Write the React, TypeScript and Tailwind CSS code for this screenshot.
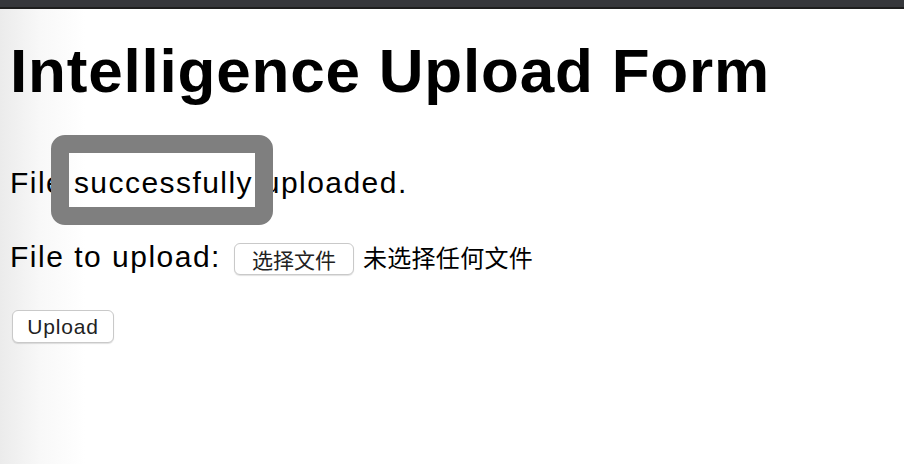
import React from 'react';

const sans = { fontFamily: '"Liberation Sans", Arial, "Noto Sans CJK SC", sans-serif' };
const cjk = { fontFamily: '"Noto Sans CJK SC", sans-serif' };

const App = () => {
    return (
        <div className="relative w-full h-[464px] overflow-hidden bg-white" style={sans}>
            {/* window chrome strip */}
            <div className="h-[7px] bg-[#36373b]" />
            <div className="h-[2px] bg-[#1e1e1e]" />

            <main className="h-[455px] pt-[31px] px-[10px] bg-[linear-gradient(to_right,#ebebeb,#f8f8f8_40px,#ffffff_85px)] text-black">
                <h1 className="text-[62px] leading-[62px] font-bold tracking-[0.8px]">
                    Intelligence Upload Form
                </h1>

                <p className="mt-[63px] text-[30px] leading-[36px] tracking-[1.45px]">
                    File successfully uploaded.
                </p>

                <div className="mt-[38px] flex items-start">
                    <label className="text-[30px] leading-[36px] tracking-[1.5px]">File to upload:</label>
                    <button className="ml-[13px] mt-[4px] w-[120px] h-[32px] rounded-[6px] border border-[#c9c9c9] bg-white shadow-[0_1px_1px_rgba(0,0,0,0.12)] text-[21px] leading-none text-[#222]" style={cjk}>
                        选择文件
                    </button>
                    <span className="ml-[9px] text-[24px] leading-[36px] tracking-[0.3px]" style={cjk}>
                        未选择任何文件
                    </span>
                </div>

                <button className="mt-[35px] ml-[2px] w-[102px] h-[33px] rounded-[6px] border border-[#c9c9c9] bg-white shadow-[0_1px_1px_rgba(0,0,0,0.12)] text-[21px] leading-none tracking-[0.8px] text-[#222]">
                    Upload
                </button>
            </main>

            {/* highlight ring over the status message */}
            <div className="absolute left-[51px] top-[135px] w-[222px] h-[90px] rounded-[14px] border-[18px] border-[#7f7f7f]" />
        </div>
    );
};

export default App;
